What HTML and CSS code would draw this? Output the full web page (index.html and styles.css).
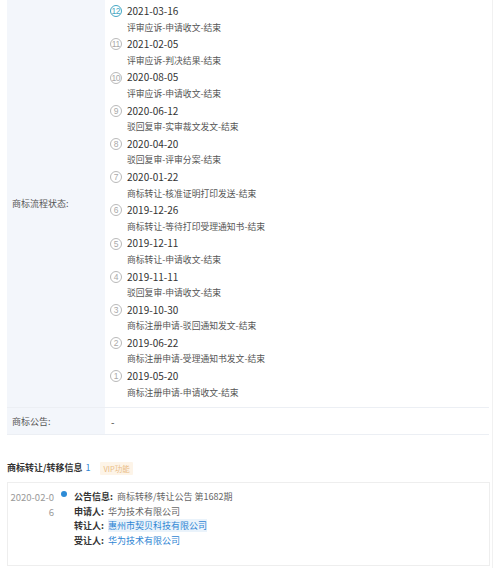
FILE: index.html
```html
<!DOCTYPE html>
<html lang="zh-CN">
<head>
<meta charset="utf-8">
<title>商标流程</title>
<link rel="stylesheet" href="styles.css">
</head>
<body>
<div class="page">
  <div class="table">
    <div class="row row-flow">
      <div class="label">商标流程状态:</div>
      <div class="value">
        <ul class="flow">
          <li class="step current"><span class="num">12</span><div class="txt"><div class="date">2021-03-16</div><div class="desc">评审应诉-申请收文-结束</div></div></li>
          <li class="step"><span class="num">11</span><div class="txt"><div class="date">2021-02-05</div><div class="desc">评审应诉-判决结果-结束</div></div></li>
          <li class="step"><span class="num">10</span><div class="txt"><div class="date">2020-08-05</div><div class="desc">评审应诉-申请收文-结束</div></div></li>
          <li class="step"><span class="num">9</span><div class="txt"><div class="date">2020-06-12</div><div class="desc">驳回复审-实审裁文发文-结束</div></div></li>
          <li class="step"><span class="num">8</span><div class="txt"><div class="date">2020-04-20</div><div class="desc">驳回复审-评审分案-结束</div></div></li>
          <li class="step"><span class="num">7</span><div class="txt"><div class="date">2020-01-22</div><div class="desc">商标转让-核准证明打印发送-结束</div></div></li>
          <li class="step"><span class="num">6</span><div class="txt"><div class="date">2019-12-26</div><div class="desc">商标转让-等待打印受理通知书-结束</div></div></li>
          <li class="step"><span class="num">5</span><div class="txt"><div class="date">2019-12-11</div><div class="desc">商标转让-申请收文-结束</div></div></li>
          <li class="step"><span class="num">4</span><div class="txt"><div class="date">2019-11-11</div><div class="desc">驳回复审-申请收文-结束</div></div></li>
          <li class="step"><span class="num">3</span><div class="txt"><div class="date">2019-10-30</div><div class="desc">商标注册申请-驳回通知发文-结束</div></div></li>
          <li class="step"><span class="num">2</span><div class="txt"><div class="date">2019-06-22</div><div class="desc">商标注册申请-受理通知书发文-结束</div></div></li>
          <li class="step"><span class="num">1</span><div class="txt"><div class="date">2019-05-20</div><div class="desc">商标注册申请-申请收文-结束</div></div></li>
        </ul>
      </div>
    </div>
    <div class="row row-notice">
      <div class="label">商标公告:</div>
      <div class="value">-</div>
    </div>
  </div>

  <h3 class="section-title">商标转让/转移信息 <span class="count">1</span> <span class="vip">VIP功能</span></h3>

  <div class="card">
    <div class="c-date">2020-02-06</div>
    <div class="c-dot"><span></span></div>
    <div class="c-body">
      <div class="line"><b>公告信息:</b><span class="val">商标转移/转让公告 第1682期</span></div>
      <div class="line"><b>申请人:</b><span class="val">华为技术有限公司</span></div>
      <div class="line"><b>转让人:</b><span class="val link hl">惠州市契贝科技有限公司</span></div>
      <div class="line"><b>受让人:</b><span class="val link">华为技术有限公司</span></div>
    </div>
  </div>
</div>
</body>
</html>
```

FILE: styles.css
```css
* { box-sizing: border-box; }
html, body { margin: 0; padding: 0; background: #fff; }
body {
  font-family: "Noto Sans CJK SC", "Noto Sans", sans-serif;
  color: #333;
  width: 499px;
  height: 568px;
  overflow: hidden;
}
.page {
  width: 493px;
  height: 568px;
  border-right: 1px solid #f1f1f1;
  padding-left: 7px;
}
.table {
  width: 482px;
}
.row {
  display: grid;
  grid-template-columns: 98px 1fr;
  border-bottom: 1px solid #eceff4;
}
.label {
  background: #f3f6fb;
  font-size: 9px;
  color: #555;
  padding-left: 5px;
  display: flex;
  align-items: center;
}
.value {
  padding-left: 5px;
  font-size: 10px;
  color: #444;
}
.flow {
  list-style: none;
  margin: 0;
  padding: 3px 0 6px;
}
.step {
  display: flex;
  align-items: flex-start;
  height: 33.2px;
}
.num {
  width: 12px;
  height: 12px;
  margin-top: 2.3px;
  border: 1px solid #b9b9b9;
  border-radius: 50%;
  color: #a9a9a9;
  font-size: 8.5px;
  line-height: 10px;
  text-align: center;
  flex: none;
  font-family: "Liberation Sans", sans-serif;
  letter-spacing: -0.5px;
  text-indent: -0.5px;
}
.step.current .num {
  border-color: #45a7c4;
  color: #45a7c4;
  border-width: 1.2px;
}
.txt {
  margin-left: 5px;
}
.date {
  font-size: 10px;
  line-height: 16.6px;
  color: #333;
}
.desc {
  font-size: 8.8px;
  line-height: 16.6px;
  color: #555;
}
.row-notice {
  height: 27px;
}
.row-notice .value {
  display: flex;
  align-items: center;
  padding-left: 6px;
}
.section-title {
  margin: 26px 0 0;
  font-size: 9px;
  line-height: 14px;
  font-weight: bold;
  color: #333;
  display: flex;
  align-items: center;
  gap: 0;
}
.count {
  color: #2f86d4;
  font-weight: normal;
  margin-left: 3px;
}
.vip {
  margin-left: 10px;
  background: #fdf4e8;
  color: #e9bd86;
  font-size: 7.5px;
  font-weight: normal;
  line-height: 13px;
  padding: 0 3px;
  border-radius: 1px;
}
.card {
  margin-top: 7px;
  width: 483px;
  height: 84px;
  border: 1px solid #eeeeee;
  padding: 7px 0 0 2px;
  display: grid;
  grid-template-columns: 44px 20px 1fr;
  align-items: start;
  font-size: 9px;
  line-height: 14.5px;
}
.c-date {
  color: #9a9a9a;
  font-size: 9.5px;
  text-align: right;
  word-break: break-all;
}
.c-dot {
  display: flex;
  justify-content: center;
}
.c-dot span {
  width: 6px;
  height: 6px;
  border-radius: 50%;
  background: #2d8bd6;
  margin-top: 0.5px;
}
.line b {
  color: #333;
  font-weight: bold;
  margin-right: 4px;
}
.val {
  color: #666;
}
.link {
  color: #2f86d4;
}
.hl {
  background: #eaf3fb;
}
```
